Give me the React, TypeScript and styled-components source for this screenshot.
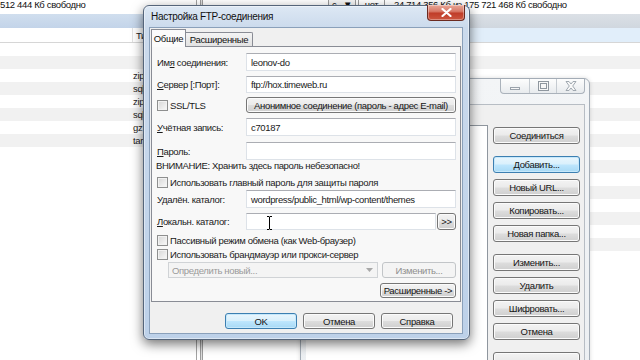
import React from "react";
import styled, { createGlobalStyle, css } from "styled-components";

const GlobalStyle = createGlobalStyle`
  html, body { margin: 0; padding: 0; background: #fff; }
  body { width: 640px; height: 360px; overflow: hidden; }
  * { box-sizing: border-box; }
`;

const Screen = styled.div`
  position: relative;
  width: 640px;
  height: 360px;
  overflow: hidden;
  background: #fff;
  font-family: "Liberation Sans", Arial, sans-serif;
  font-size: 9.5px;
  letter-spacing: -0.35px;
  color: #1b1b1b;
`;

/* ---------- commander main window ---------- */
const Panels = styled.div`
  display: flex;
  height: 100%;
`;

const Panel = styled.div<{ $w?: number }>`
  display: flex;
  flex-direction: column;
  min-width: 0;
  ${(p) =>
    p.$w
      ? css`
          width: ${p.$w}px;
          flex: none;
        `
      : css`
          flex: 1;
        `}
`;

const DriveInfo = styled.div<{ $indent: number }>`
  display: flex;
  align-items: center;
  height: 13px;
  margin-top: -2px;
  line-height: 13px;
  padding-left: ${(p) => p.$indent}px;
  white-space: nowrap;
  color: #111;
`;

const DriveBox = styled.span<{ $w: number }>`
  display: inline-flex;
  justify-content: space-between;
  align-items: center;
  width: ${(p) => p.$w}px;
  height: 13px;
  padding: 0 3px;
  border: 1px solid #9a9a9a;
  background: #f4f4f4;
`;

const NetBox = styled.span`
  display: inline-flex;
  justify-content: center;
  width: 27px;
  margin-left: 2px;
  border-left: 1px solid #9a9a9a;
  border-right: 1px solid #9a9a9a;
`;

const FreeText = styled.span`
  margin-left: 9px;
`;

const PathBar = styled.div<{ $active?: boolean }>`
  height: 14px;
  margin-top: 3px;
  background: ${(p) =>
    p.$active
      ? "linear-gradient(#d0deee, #c3d4e9)"
      : "linear-gradient(#dbe0e6, #d0d7df)"};
`;

const HeaderRow = styled.div<{ $tint?: boolean }>`
  display: flex;
  align-items: center;
  height: 15px;
  border-bottom: 1px solid #d6d6d6;
  background: ${(p) => (p.$tint ? "#e1eefa" : "#fff")};
  color: #222;
`;

const HeaderCell = styled.div<{ $w?: number }>`
  ${(p) => (p.$w ? `width: ${p.$w}px; flex: none;` : "flex: 1;")}
  height: 100%;
  display: flex;
  align-items: center;
  padding-left: 3px;
  border-right: 1px solid #e2e2e2;
`;

const FileRow = styled.div<{ $alt: boolean }>`
  display: flex;
  align-items: center;
  height: 13px;
  background: ${(p) => (p.$alt ? "#f1f1f1" : "#fff")};
  color: #222;
`;

const NameCell = styled.div`
  width: 133px;
  flex: none;
`;

const TypeCell = styled.div`
  flex: 1;
`;

const Splitter = styled.div`
  width: 7px;
  flex: none;
  border-left: 1px solid #a2a2a2;
  background: linear-gradient(
    90deg,
    #fff 0 3px,
    #9c9c9c 3px 4px,
    #dedede 4px 5px,
    #9c9c9c 5px 6px
  );
`;

/* ---------- FTP settings dialog ---------- */
const Dialog = styled.div`
  position: absolute;
  left: 143px;
  top: 5px;
  width: 327px;
  height: 335px;
  display: flex;
  flex-direction: column;
  padding: 0 6px 5px 5px;
  border: 1px solid #55657a;
  border-radius: 6px;
  background: linear-gradient(180deg, #dde8f4 0px, #cbdaec 22px, #bdd1e9 100%);
  box-shadow: inset 0 0 0 1px rgba(255, 255, 255, 0.45),
    0 4px 12px rgba(0, 0, 0, 0.55);
  z-index: 2;
`;

const TitleBar = styled.div`
  display: flex;
  align-items: flex-start;
  justify-content: space-between;
  height: 21px;
  margin: 0 -6px 0 -5px;
  padding: 0 4px 0 7px;
`;

const Title = styled.div`
  margin-top: 5px;
  font-size: 10px;
  letter-spacing: -0.3px;
  line-height: 12px;
  color: #101010;
`;

const CloseButton = styled.div`
  width: 38px;
  height: 16px;
  margin-top: -1px;
  display: flex;
  align-items: center;
  justify-content: center;
  border: 1px solid #6b2a20;
  border-top: none;
  border-radius: 0 0 4px 4px;
  background: linear-gradient(#e8a898 0%, #d87a68 42%, #c03d29 55%, #cc563f 100%);
  box-shadow: inset 0 0 0 1px rgba(255, 255, 255, 0.35);
`;

const Client = styled.div`
  flex: 1;
  display: flex;
  flex-direction: column;
  border: 1px solid #8aa0ba;
  background: #f0f0f0;
  padding: 1px 1px 0 1px;
`;

const TabStrip = styled.div`
  display: flex;
  align-items: flex-end;
  height: 17px;
  position: relative;
  z-index: 1;
`;

const Tab = styled.div<{ $active?: boolean; $w: number }>`
  width: ${(p) => p.$w}px;
  display: flex;
  align-items: center;
  justify-content: center;
  border: 1px solid #898c95;
  border-bottom: none;
  color: #111;
  ${(p) =>
    p.$active
      ? css`
          height: 18px;
          margin-bottom: -1px;
          background: #fbfbfb;
        `
      : css`
          height: 14px;
          border-left: none;
          background: linear-gradient(#f4f4f4, #e2e2e2);
          border-radius: 0 2px 0 0;
        `}
`;

const TabPanel = styled.div`
  height: 256px;
  flex: none;
  display: flex;
  flex-direction: column;
  padding: 0 4px 0 5px;
  border: 1px solid #898c95;
  background: #f8f8f8;
`;

const Row = styled.div<{ $mt: number; $h: number; $indent?: number; $end?: boolean }>`
  display: flex;
  align-items: center;
  margin-top: ${(p) => p.$mt}px;
  height: ${(p) => p.$h}px;
  padding-left: ${(p) => p.$indent ?? 0}px;
  justify-content: ${(p) => (p.$end ? "flex-end" : "flex-start")};
  white-space: nowrap;
  flex: none;
`;

const Label = styled.div`
  width: 89px;
  flex: none;
  color: #1a1a1a;
`;

const CheckLabel = styled.label<{ $w?: number }>`
  display: flex;
  align-items: center;
  gap: 2px;
  ${(p) => (p.$w ? `width: ${p.$w}px; flex: none;` : "")}
  color: #1a1a1a;
`;

const Check = styled.span`
  width: 11px;
  height: 11px;
  flex: none;
  border: 1px solid #8e8f8f;
  background: linear-gradient(135deg, #d6d6d6, #fafafa);
  box-shadow: inset 0 0 0 1px #f2f2f2;
`;

const TextInput = styled.div`
  position: relative;
  flex: 1;
  height: 100%;
  display: flex;
  align-items: center;
  padding-left: 4px;
  background: #fff;
  border: 1px solid #dde2e8;
  border-top-color: #abadb3;
  color: #1a1a1a;
`;

const Cursor = styled.svg`
  position: absolute;
  left: 19px;
  top: 2px;
`;

type Variant = "normal" | "focus" | "disabled";

const Button = styled.div<{ $w?: number; $v?: Variant; $ml?: number }>`
  ${(p) => (p.$w ? `width: ${p.$w}px; flex: none;` : "flex: 1;")}
  margin-left: ${(p) => p.$ml ?? 0}px;
  height: 100%;
  display: flex;
  align-items: center;
  justify-content: center;
  border-radius: 3px;
  color: #151515;
  ${(p) =>
    p.$v === "focus"
      ? css`
          border: 1px solid #3c7fb1;
          background: linear-gradient(#eaf6fd 0%, #d9f0fc 48%, #bee6fd 52%, #a7d9f5 100%);
          box-shadow: inset 0 0 0 1px #c6e8fb;
        `
      : p.$v === "disabled"
      ? css`
          border: 1px solid #c2c5c8;
          background: #f4f4f4;
          color: #8f8f8f;
        `
      : css`
          border: 1px solid #767676;
          background: linear-gradient(#f3f3f3 0%, #ebebeb 48%, #dddddd 52%, #cfcfcf 100%);
          box-shadow: inset 0 0 0 1px #fbfbfb;
        `}
`;

const Combo = styled.div`
  width: 210px;
  flex: none;
  height: 100%;
  display: flex;
  align-items: center;
  justify-content: space-between;
  padding: 0 4px 0 3px;
  border: 1px solid #d0d3d6;
  background: #f4f4f4;
  color: #9a9a9a;
`;

const Warning = styled.div<{ $mt: number }>`
  margin-top: ${(p) => p.$mt}px;
  height: 10px;
  line-height: 10px;
  flex: none;
  margin-left: -1px;
  color: #1a1a1a;
`;

const Footer = styled.div`
  display: flex;
  justify-content: flex-end;
  gap: 6px;
  height: 27px;
  padding: 11px 8px 0 0;
`;

/* ---------- background connect window ---------- */
const BgWindow = styled.div`
  position: absolute;
  left: 300px;
  top: 78px;
  width: 290px;
  height: 300px;
  display: flex;
  flex-direction: column;
  padding: 0 4px 0 5px;
  border: 1px solid #a3acb6;
  border-radius: 6px 6px 0 0;
  background: linear-gradient(#f3f5f7, #eceff2);
  box-shadow: 0 0 4px rgba(0, 0, 0, 0.15);
  z-index: 1;
`;

const BgTitleBar = styled.div`
  display: flex;
  justify-content: flex-end;
  height: 25px;
  flex: none;
`;

const Caption = styled.div`
  display: flex;
  height: 15px;
  border: 1px solid #aab2bb;
  border-top: none;
  border-radius: 0 0 4px 4px;
  background: linear-gradient(#fdfdfd, #e8ebee);
  overflow: hidden;
`;

const CapBtn = styled.div<{ $w: number }>`
  width: ${(p) => p.$w}px;
  display: flex;
  align-items: center;
  justify-content: center;
  & + & {
    border-left: 1px solid #c5cbd1;
  }
`;

const BgClient = styled.div`
  flex: 1;
  display: flex;
  border-top: 1px solid #b7bdc4;
  border-right: 1px solid #b7bdc4;
  background: #f0f0f0;
`;

const ListBox = styled.div`
  flex: 1;
  margin-top: 20px;
  background: #fff;
  border-top: 1px solid #8f969e;
  border-right: 1px solid #8f969e;
`;

const ButtonCol = styled.div`
  width: 87px;
  flex: none;
  margin: 0 4px 0 5px;
  display: flex;
  flex-direction: column;
`;

const ColButton = styled(Button)<{ $mt: number }>`
  flex: none;
  width: 100%;
  height: 17px;
  margin-top: ${(p) => p.$mt}px;
`;

const leftTypes = ["", "", "zip", "sql", "zip", "sql", "gz", "tar"];
const rightRows = Array.from({ length: 16 });

const colButtons: { t: string; mt: number; v?: Variant }[] = [
  { t: "Соединиться", mt: 22 },
  { t: "Добавить...", mt: 12, v: "focus" },
  { t: "Новый URL...", mt: 6 },
  { t: "Копировать...", mt: 6 },
  { t: "Новая папка...", mt: 6 },
  { t: "Изменить...", mt: 12 },
  { t: "Удалить", mt: 6 },
  { t: "Шифровать...", mt: 6 },
  { t: "Отмена", mt: 6 },
  { t: "", mt: 12 },
];

const CURSOR_PATH =
  "M1 0.5 H3 L3.5 1 L4 0.5 H6 M3.5 1 V13 M1 13.5 H3 L3.5 13 L4 13.5 H6";

export default function App() {
  return (
    <Screen>
      <GlobalStyle />
      <Panels>
        <Panel $w={196}>
          <DriveInfo $indent={0}>512 444 Кб свободно</DriveInfo>
          <PathBar $active />
          <HeaderRow>
            <HeaderCell $w={133} />
            <HeaderCell>Тип</HeaderCell>
          </HeaderRow>
          {leftTypes.map((t, i) => (
            <FileRow key={i} $alt={i % 2 === 1}>
              <NameCell />
              <TypeCell>{t}</TypeCell>
            </FileRow>
          ))}
        </Panel>
        <Splitter />
        <Panel>
          <DriveInfo $indent={125}>
            <DriveBox $w={28}>
              <span>c</span>
              <span>▼</span>
            </DriveBox>
            <NetBox>нет</NetBox>
            <FreeText>24 714 356 Кб из 175 721 468 Кб свободно</FreeText>
          </DriveInfo>
          <PathBar />
          <HeaderRow $tint />
          {rightRows.map((_, i) => (
            <FileRow key={i} $alt={i % 2 === 1} />
          ))}
        </Panel>
      </Panels>

      <BgWindow>
        <BgTitleBar>
          <Caption>
            <CapBtn $w={28}>
              <svg width="10" height="10" viewBox="0 0 10 10">
                <rect x="0.5" y="6.5" width="9" height="2" fill="#f7f7f7" stroke="#9aa2ab" />
              </svg>
            </CapBtn>
            <CapBtn $w={27}>
              <svg width="11" height="10" viewBox="0 0 11 10">
                <rect x="0.5" y="0.5" width="10" height="9" fill="#f7f7f7" stroke="#8f979f" />
                <rect x="2.5" y="2.5" width="6" height="5" fill="none" stroke="#8f979f" />
              </svg>
            </CapBtn>
            <CapBtn $w={28}>
              <svg width="12" height="10" viewBox="0 0 12 10">
                <path
                  d="M1 0.5 H4 L6 3 L8 0.5 H11 L7.7 5 L11 9.5 H8 L6 7 L4 9.5 H1 L4.3 5 Z"
                  fill="#f8f8f8"
                  stroke="#97a0a9"
                  strokeWidth="0.9"
                />
              </svg>
            </CapBtn>
          </Caption>
        </BgTitleBar>
        <BgClient>
          <ListBox />
          <ButtonCol>
            {colButtons.map((b, i) => (
              <ColButton key={i} $mt={b.mt} $v={b.v}>
                {b.t}
              </ColButton>
            ))}
          </ButtonCol>
        </BgClient>
      </BgWindow>

      <Dialog>
        <TitleBar>
          <Title>Настройка FTP-соединения</Title>
          <CloseButton>
            <svg width="11" height="9" viewBox="0 0 11 9">
              <path d="M1.5 1 L9.5 8 M9.5 1 L1.5 8" stroke="#fff" strokeWidth="2.2" strokeLinecap="round" />
            </svg>
          </CloseButton>
        </TitleBar>
        <Client>
          <TabStrip>
            <Tab $active $w={35}>Общие</Tab>
            <Tab $w={67}>Расширенные</Tab>
          </TabStrip>
          <TabPanel>
            <Row $mt={6} $h={18}>
              <Label>
                Им<u>я</u> соединения:
              </Label>
              <TextInput>leonov-do</TextInput>
            </Row>
            <Row $mt={5} $h={17}>
              <Label>
                <u>С</u>ервер [:Порт]:
              </Label>
              <TextInput>ftp://hox.timeweb.ru</TextInput>
            </Row>
            <Row $mt={4} $h={16}>
              <CheckLabel $w={89}>
                <Check />
                SSL/TLS
              </CheckLabel>
              <Button>Анонимное соединение (пароль - адрес E-mail)</Button>
            </Row>
            <Row $mt={5} $h={18}>
              <Label>
                <u>У</u>чётная запись:
              </Label>
              <TextInput>c70187</TextInput>
            </Row>
            <Row $mt={6} $h={18}>
              <Label>
                <u>П</u>ароль:
              </Label>
              <TextInput />
            </Row>
            <Warning $mt={1}>ВНИМАНИЕ: Хранить здесь пароль небезопасно!</Warning>
            <Row $mt={5} $h={12}>
              <CheckLabel>
                <Check />
                Использовать главный пароль для защиты пароля
              </CheckLabel>
            </Row>
            <Row $mt={2} $h={18}>
              <Label>Удалён. каталог:</Label>
              <TextInput>wordpress/public_html/wp-content/themes</TextInput>
            </Row>
            <Row $mt={5} $h={17}>
              <Label>
                <u>Л</u>окальн. каталог:
              </Label>
              <TextInput>
                <Cursor width="7" height="14" viewBox="0 0 7 14">
                  <path d={CURSOR_PATH} fill="none" stroke="#fff" strokeWidth="2.2" />
                  <path d={CURSOR_PATH} fill="none" stroke="#000" strokeWidth="1" />
                </Cursor>
              </TextInput>
              <Button $w={19} $ml={1}>
                &gt;&gt;
              </Button>
            </Row>
            <Row $mt={4} $h={13}>
              <CheckLabel>
                <Check />
                Пассивный режим обмена (как Web-браузер)
              </CheckLabel>
            </Row>
            <Row $mt={1} $h={12}>
              <CheckLabel>
                <Check />
                Использовать брандмауэр или прокси-сервер
              </CheckLabel>
            </Row>
            <Row $mt={2} $h={16} $indent={11}>
              <Combo>
                <span>Определить новый...</span>
                <svg width="7" height="4" viewBox="0 0 7 4">
                  <path d="M0 0 H7 L3.5 4 Z" fill="#a8a8a8" />
                </svg>
              </Combo>
              <Button $v="disabled" $ml={4}>
                Изменить...
              </Button>
            </Row>
            <Row $mt={5} $h={15} $end>
              <Button $w={76}>Расширенные -&gt;</Button>
            </Row>
          </TabPanel>
          <Footer>
            <Button $w={72} $v="focus">
              OK
            </Button>
            <Button $w={72}>Отмена</Button>
            <Button $w={72}>Справка</Button>
          </Footer>
        </Client>
      </Dialog>
    </Screen>
  );
}
